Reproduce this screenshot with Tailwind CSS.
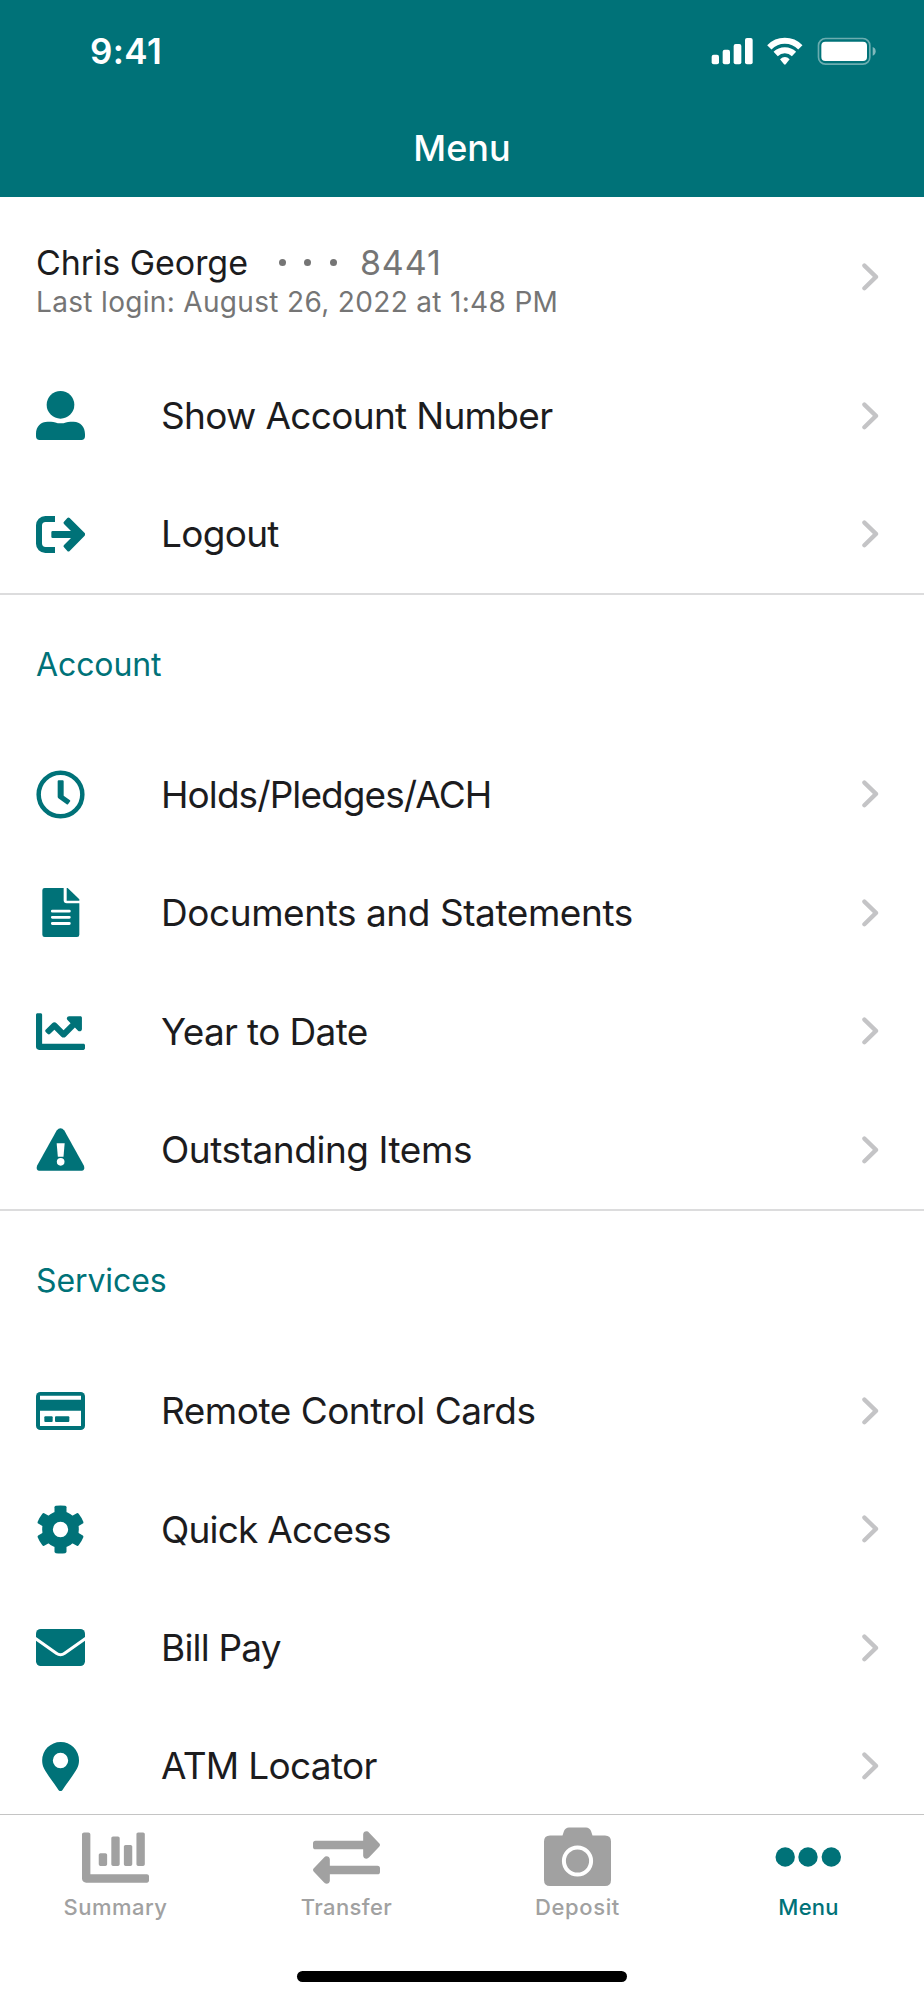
<!DOCTYPE html>
<html lang="en">
<head>
<meta charset="utf-8">
<title>Menu</title>
<script src="https://cdn.jsdelivr.net/npm/@tailwindcss/browser@4"></script>
</head>
<body class="bg-white">
<div class="flex h-[2000px] w-[924px] flex-col overflow-hidden bg-white font-['Inter','Liberation_Sans',sans-serif] text-[#1c1c1e]">
  <svg class="hidden">
    <symbol id="chev" viewBox="0 0 17 28"><path d="M2.4 2.6 14 13.9 2.4 25.2" fill="none" stroke="#c4c4c6" stroke-width="4.3" stroke-linecap="round" stroke-linejoin="round"/></symbol>
  </svg>

  <header class="flex h-[197px] shrink-0 flex-col bg-[#007278] text-white">
    <div class="flex h-[101px] items-center justify-between pl-[90px] pr-[47px]">
      <span class="pt-[2px] text-[35px] font-semibold tracking-[0.4px]">9:41</span>
      <svg class="h-[28px] w-[166px]" viewBox="94 48 498 84" fill="#fff">
        <rect x="96" y="101" width="22" height="29" rx="6"/><rect x="129" y="86" width="22" height="44" rx="6"/><rect x="162" y="69" width="23" height="61" rx="6"/><rect x="196" y="51" width="23" height="79" rx="6"/>
        <path d="M269 79A65 65 0 0 1 362 79M288 99A39 39 0 0 1 343 99" fill="none" stroke="#fff" stroke-width="18"/>
        <path d="M301 115Q316 101 330 115L318 130Q316 132 313 130Z"/>
        <rect x="416.500" y="52.500" width="154" height="77" rx="21" fill="none" stroke="#fff" stroke-opacity=".42" stroke-width="5"/>
        <rect x="425" y="62" width="137" height="58" rx="12"/>
        <path d="M579 78Q588 81 588 91T579 104Z" fill-opacity=".5"/>
      </svg>
    </div>
    <h1 class="flex h-[94px] items-center justify-center text-[36px] font-medium">Menu</h1>
  </header>

  <main class="h-[1617px] shrink-0 overflow-hidden">
    <section class="border-b-2 border-[#dcdcdd]">
      <div class="flex h-[159.500px] items-center justify-between pr-[45px] pl-[36px]">
        <div class="pt-[9px]">
          <div class="flex h-[42px] items-center text-[34px]">
            <span class="tracking-[-0.05px]">Chris George</span>
            <span class="ml-[31px] flex gap-[18.500px] pt-[1px]"><i class="size-[7px] rounded-full bg-[#757575]"></i><i class="size-[7px] rounded-full bg-[#757575]"></i><i class="size-[7px] rounded-full bg-[#757575]"></i></span>
            <span class="ml-[23px] tracking-[0.900px] text-[#757575]">8441</span>
          </div>
          <div class="flex h-[38px] items-center text-[28px] tracking-[0.330px] text-[#757575]">Last login: August 26, 2022 at 1:48 PM</div>
        </div>
        <svg class="h-[28px] w-[17px]"><use href="#chev"/></svg>
      </div>
      <div class="flex h-[118.400px] items-center pr-[45px] pl-[36px]">
        <svg class="h-[49px] w-[49px]" viewBox="47 63 147 147" fill="#007278"><circle cx="120.500" cy="104.500" r="41.500"/><path d="M47 192C47 168 62 155 82 155H92C102 155 108 160 121 160S140 155 150 155H160C180 155 194 170 194 192V199Q194 210 183 210H58Q47 210 47 199Z"/></svg>
        <span class="ml-[76px] flex-1 text-[37px] tracking-[-0.680px]">Show Account Number</span>
        <svg class="h-[28px] w-[17px]"><use href="#chev"/></svg>
      </div>
      <div class="flex h-[118.400px] items-center pr-[45px] pl-[36px]">
        <svg class="h-[37px] w-[49px]" viewBox="47 437 147 111" fill="#007278"><path d="M104 437H75A28 28 0 0 0 47 465V520A28 28 0 0 0 75 548H104V530H76A11 11 0 0 1 65 519V466A11 11 0 0 1 76 455H104Z"/><path d="M131 454 141 443Q144 440 148 443L193 488Q196 492 193 496L148 542Q144 545 141 542L131 531Q128 528 131 524L152 503H97Q93 503 93 499V486Q93 482 97 482H152L131 461Q128 457 131 454Z"/></svg>
        <span class="ml-[76px] flex-1 text-[37px] tracking-[-0.700px]">Logout</span>
        <svg class="h-[28px] w-[17px]"><use href="#chev"/></svg>
      </div>
    </section>

    <section class="border-b-2 border-[#dcdcdd]">
      <h2 class="flex h-[140px] items-center pl-[36px] text-[32px] tracking-[-0.100px] text-[#007278]">Account</h2>
      <div class="flex h-[118.400px] items-center pr-[45px] pl-[36px]">
        <svg class="h-[49px] w-[49px]" viewBox="47 31.500 147 147" fill="#007278"><circle cx="120.500" cy="105" r="65.500" fill="none" stroke="#007278" stroke-width="13.500"/><path d="M115 62H127Q130 62 130 65V109L149 122Q151 124 149 126L143 134Q141 136 139 134L115 117Q112 115 112 112V65Q112 62 115 62Z"/></svg>
        <span class="ml-[76px] flex-1 text-[37px] tracking-[-0.920px]">Holds/Pledges/ACH</span>
        <svg class="h-[28px] w-[17px]"><use href="#chev"/></svg>
      </div>
      <div class="flex h-[118.400px] items-center pr-[45px] pl-[36px]">
        <svg class="h-[49px] w-[49px]" viewBox="47 387 147 147" fill="#007278"><path d="M73 387H130V424Q130 433 139 433H177V527Q177 534 170 534H73Q66 534 66 527V394Q66 387 73 387Z"/><path d="M139 387H142L177 421V425H139Z"/><path d="M96 456.500H147M96 475H147M96 493.500H147" stroke="#fff" stroke-width="8.500" stroke-linecap="round"/></svg>
        <span class="ml-[76px] flex-1 text-[37px] tracking-[-0.440px]">Documents and Statements</span>
        <svg class="h-[28px] w-[17px]"><use href="#chev"/></svg>
      </div>
      <div class="flex h-[118.400px] items-center pr-[45px] pl-[36px]">
        <svg class="h-[49px] w-[49px]" viewBox="0 0 512 512" fill="#007278"><path d="M496 384H64V80c0-8.840-7.160-16-16-16H16C7.160 64 0 71.160 0 80v336c0 17.670 14.330 32 32 32h464c8.840 0 16-7.160 16-16v-32c0-8.840-7.160-16-16-16zM464 96H345.940c-21.380 0-32.090 25.850-16.970 40.970l32.400 32.400L288 242.750l-73.370-73.370c-12.500-12.500-32.760-12.500-45.250 0l-68.690 68.690c-6.250 6.250-6.250 16.380 0 22.630l22.620 22.620c6.250 6.250 16.380 6.250 22.630 0L192 237.250l73.370 73.370c12.500 12.500 32.760 12.500 45.250 0l96-96 32.400 32.400c15.120 15.120 40.970 4.410 40.970-16.970V112c.01-8.840-7.150-16-15.990-16z"/></svg>
        <span class="ml-[76px] flex-1 text-[37px] tracking-[-0.640px]">Year to Date</span>
        <svg class="h-[28px] w-[17px]"><use href="#chev"/></svg>
      </div>
      <div class="flex h-[118.400px] items-center pr-[45px] pl-[36px]">
        <svg class="h-[43px] w-[49px]" viewBox="47 1104.500 147 129" fill="#007278"><path d="M109 1112Q120.500 1098 132 1112L190 1216Q197 1233 180 1233H61Q44 1233 51 1216Z"/><path d="M109 1150H133L129.500 1191H112.500Z" fill="#fff"/><circle cx="121" cy="1206" r="11.500" fill="#fff"/></svg>
        <span class="ml-[76px] flex-1 text-[37px] tracking-[-0.450px]">Outstanding Items</span>
        <svg class="h-[28px] w-[17px]"><use href="#chev"/></svg>
      </div>
    </section>

    <section>
      <h2 class="flex h-[141px] items-center pl-[36px] text-[32px] tracking-[-0.100px] text-[#007278]">Services</h2>
      <div class="flex h-[118.400px] items-center pr-[45px] pl-[36px]">
        <svg class="h-[38px] w-[49px]" viewBox="47 37 147 114" fill="#007278"><rect x="47" y="37" width="147" height="114" rx="13"/><path d="M59 48H182V60H59ZM59 93H182V139H59Z" fill="#fff"/><rect x="72" y="110" width="25" height="17" rx="3"/><rect x="104" y="110" width="43" height="17" rx="3"/></svg>
        <span class="ml-[76px] flex-1 text-[37px] tracking-[-0.500px]">Remote Control Cards</span>
        <svg class="h-[28px] w-[17px]"><use href="#chev"/></svg>
      </div>
      <div class="flex h-[118.400px] items-center pr-[45px] pl-[36px]">
        <svg class="h-[49px] w-[49px]" viewBox="-73.500 -73.500 147 147" fill="#007278">
          <circle r="39" fill="none" stroke="#007278" stroke-width="32"/>
          <path id="tooth" d="M-18-67Q-18-70-14-71Q0-73 14-71Q18-70 18-67V-45H-18Z"/>
          <use href="#tooth" transform="rotate(60)"/><use href="#tooth" transform="rotate(120)"/><use href="#tooth" transform="rotate(180)"/><use href="#tooth" transform="rotate(240)"/><use href="#tooth" transform="rotate(300)"/>
        </svg>
        <span class="ml-[76px] flex-1 text-[37px] tracking-[-0.800px]">Quick Access</span>
        <svg class="h-[28px] w-[17px]"><use href="#chev"/></svg>
      </div>
      <div class="flex h-[118.400px] items-center pr-[45px] pl-[36px]">
        <svg class="h-[37px] w-[49px]" viewBox="47 749 147 111" fill="#007278"><rect x="47" y="749" width="147" height="111" rx="14"/><path d="M42 775 108 822Q120.500 831 133 822L199 775" fill="none" stroke="#fff" stroke-width="9"/></svg>
        <span class="ml-[76px] flex-1 text-[37px] tracking-[-0.800px]">Bill Pay</span>
        <svg class="h-[28px] w-[17px]"><use href="#chev"/></svg>
      </div>
      <div class="flex h-[118.400px] items-center pr-[45px] pl-[36px]">
        <svg class="h-[49px] w-[49px]" viewBox="47 1085.500 147 147" fill="#007278" fill-rule="evenodd"><path d="M120.500 1085.500A55 55 0 0 0 65.500 1140.500C65.500 1163 73 1170 115 1230Q120.500 1236 126 1230C168 1170 176 1163 176 1140.500A55 55 0 0 0 120.500 1085.500ZM120.500 1118A23 23 0 1 1 120.500 1164A23 23 0 1 1 120.500 1118Z"/></svg>
        <span class="ml-[76px] flex-1 text-[37px] tracking-[-0.700px]">ATM Locator</span>
        <svg class="h-[28px] w-[17px]"><use href="#chev"/></svg>
      </div>
    </section>
  </main>

  <nav class="flex h-[157px] shrink-0 border-t border-[#c4c4c4] text-[22px] font-medium text-[#a1a1a1]">
    <div class="flex flex-1 flex-col items-center">
      <svg class="mt-[8.500px] h-[67px] w-[67px]" viewBox="0 0 512 512" fill="currentColor"><path d="M332.800 320h38.400c6.400 0 12.800-6.400 12.800-12.800V172.800c0-6.400-6.400-12.800-12.800-12.800h-38.400c-6.400 0-12.800 6.400-12.800 12.800v134.400c0 6.400 6.400 12.800 12.800 12.800zm96 0h38.400c6.400 0 12.800-6.400 12.800-12.800V76.800c0-6.400-6.400-12.800-12.800-12.800h-38.400c-6.400 0-12.800 6.400-12.800 12.800v230.400c0 6.400 6.400 12.800 12.800 12.800zm-288 0h38.400c6.400 0 12.800-6.400 12.800-12.800v-70.400c0-6.400-6.400-12.800-12.800-12.800h-38.400c-6.400 0-12.800 6.400-12.800 12.800v70.400c0 6.400 6.400 12.800 12.800 12.800zm96 0h38.400c6.400 0 12.800-6.400 12.800-12.800V108.800c0-6.400-6.400-12.800-12.800-12.800h-38.400c-6.400 0-12.800 6.400-12.800 12.800v198.400c0 6.400 6.400 12.800 12.800 12.800zM496 384H64V80c0-8.840-7.160-16-16-16H16C7.160 64 0 71.160 0 80v336c0 17.670 14.330 32 32 32h464c8.840 0 16-7.160 16-16v-32c0-8.840-7.160-16-16-16z"/></svg>
      <span class="tracking-[0.500px]">Summary</span>
    </div>
    <div class="flex flex-1 flex-col items-center">
      <svg class="mt-[8.500px] h-[67px] w-[67px]" viewBox="759.500 40 201 201" fill="currentColor"><path id="arr" d="M767 90H910V71Q911 62 920 62Q925 62 928 66L958 98Q963 103 958 108L928 140Q924 144 920 144Q911 144 910 135V116H767Q759.500 116 759.500 108V98Q759.500 90 767 90Z"/><use href="#arr" transform="rotate(180 860 140.500)"/></svg>
      <span class="tracking-[0.400px]">Transfer</span>
    </div>
    <div class="flex flex-1 flex-col items-center">
      <svg class="mt-[8.500px] h-[67px] w-[67px]" viewBox="0 0 67 67" fill="currentColor"><path d="M6 11.500H18.500L20 7Q21.500 3.500 25 3.500H42Q45.500 3.500 47 7L48.500 11.500H61Q67 11.500 67 17.500V56Q67 62 61 62H6Q0 62 0 56V17.500Q0 11.500 6 11.500Z"/><circle cx="33.500" cy="37" r="13.600" fill="none" stroke="#fff" stroke-width="4"/></svg>
      <span class="tracking-[0.600px]">Deposit</span>
    </div>
    <div class="flex flex-1 flex-col items-center text-[#007278]">
      <svg class="mt-[8.500px] h-[67px] w-[67px]" viewBox="0 0 67 67" fill="currentColor"><circle cx="10.200" cy="33" r="9.700"/><circle cx="33" cy="33" r="9.700"/><circle cx="56.300" cy="33" r="9.700"/></svg>
      <span class="tracking-[0.200px]">Menu</span>
    </div>
  </nav>
  <div class="mx-auto h-[11px] w-[330px] shrink-0 rounded-full bg-black"></div>
</div>
</body>
</html>
